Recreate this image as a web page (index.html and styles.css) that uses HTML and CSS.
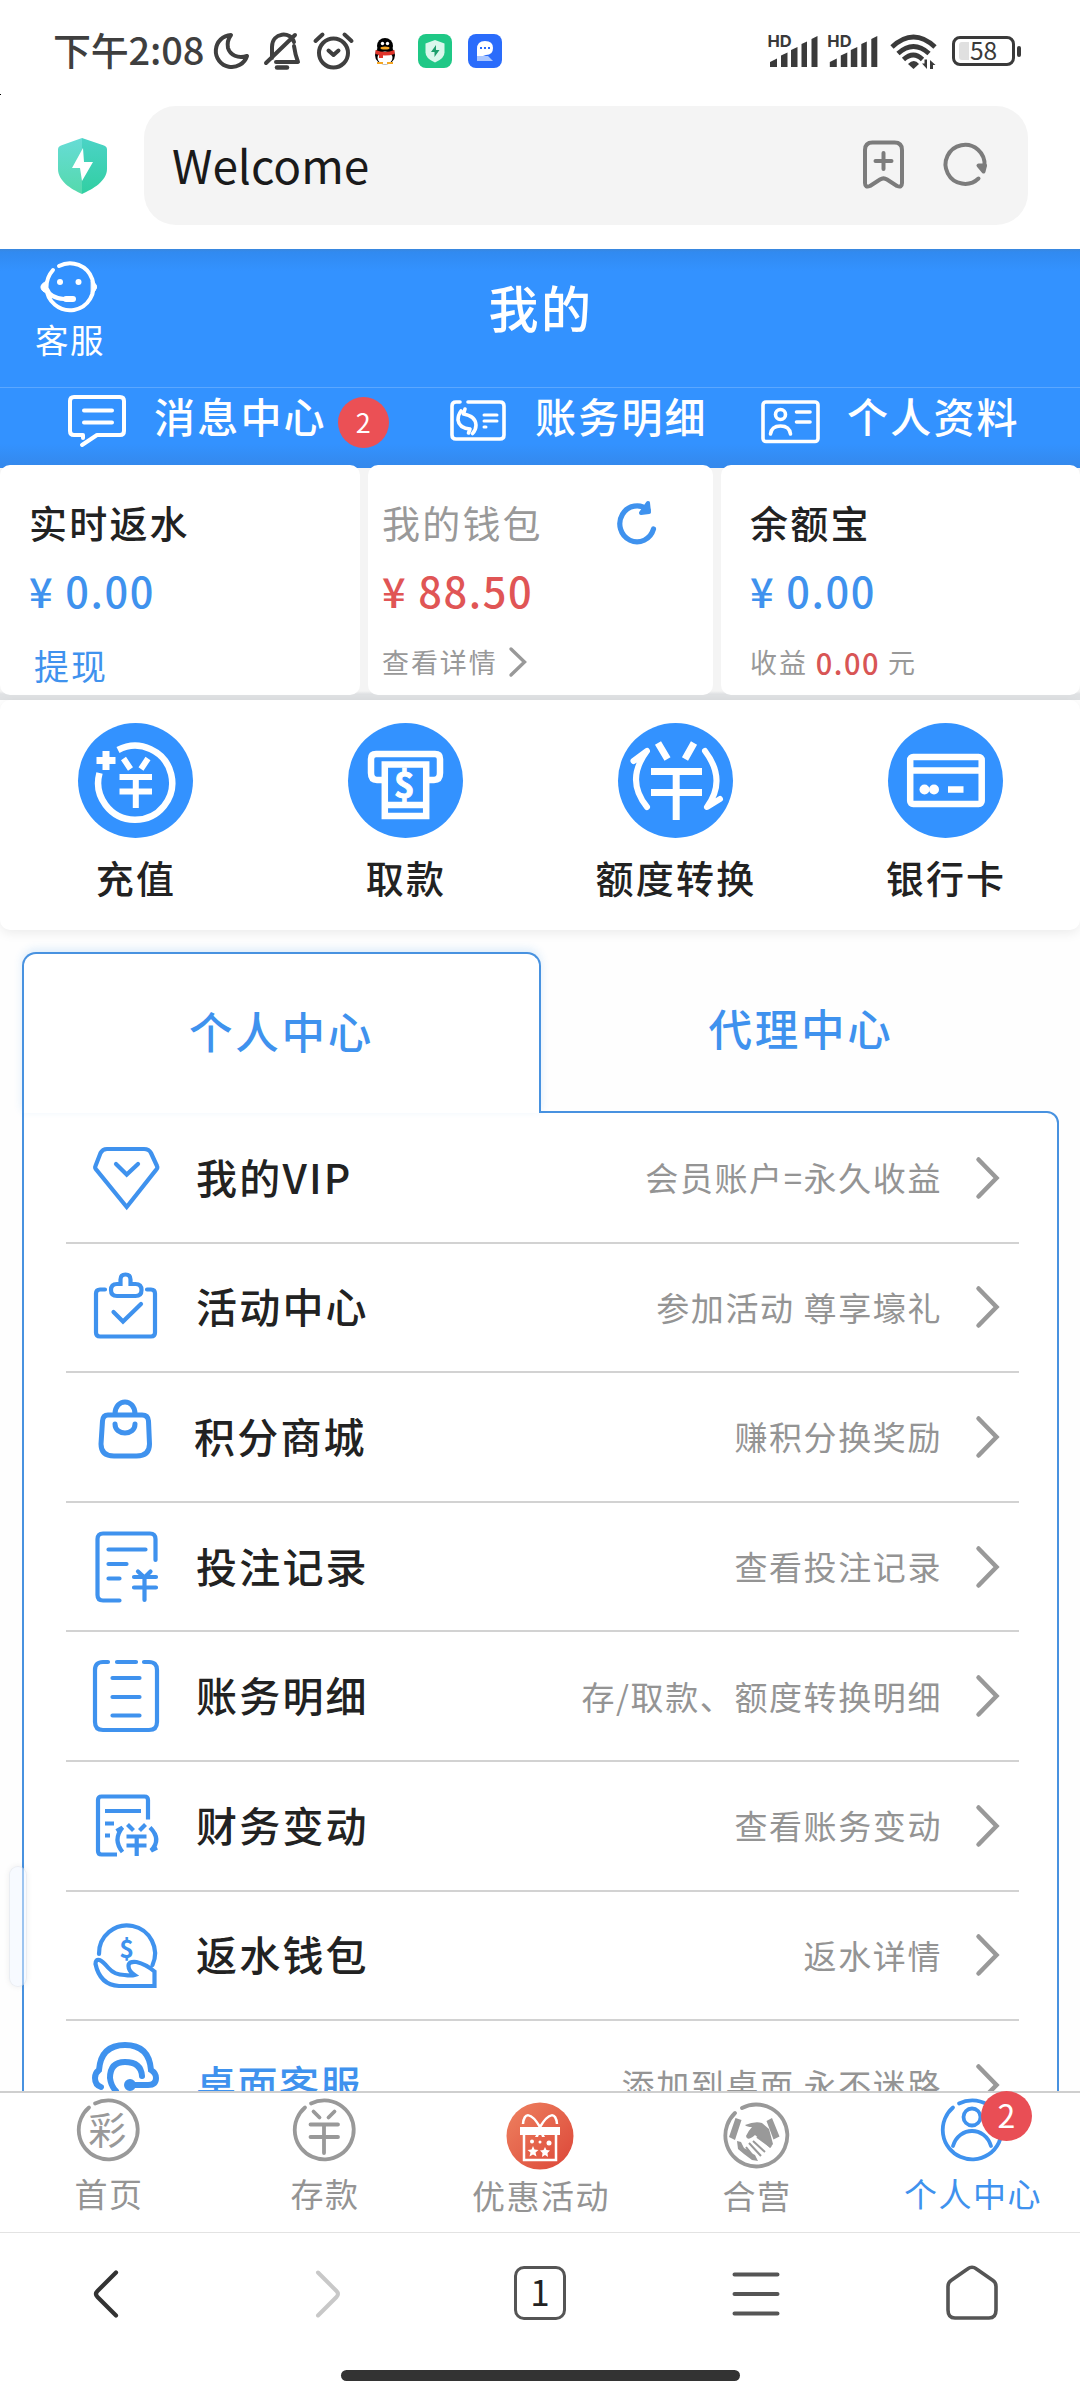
FILE: index.html
```html
<!DOCTYPE html>
<html lang="zh-CN">
<head>
<meta charset="utf-8">
<title>我的</title>
<link rel="stylesheet" href="styles.css">
</head>
<body>
<div class="screen">
  <div class="status">
    <span class="clock">下午2:08</span>
    <svg class="status-icons" width="298" height="44" viewBox="212 30 298 44">
      <g fill="none" stroke="#3f3f3f" stroke-width="4" stroke-linecap="round" stroke-linejoin="round">
        <path d="M231 35a16 16 0 1 0 16 21c-9 3-17-1-19-8-1-5 0-9 3-13z"/>
        <path d="M272 58V47c0-15 19-16 22-5M294 46c1 7 2 11 4 16h-22M266 63l29-28"/>
        <path d="M277 67.500h10" stroke-width="4.500"/>
        <circle cx="333.500" cy="53" r="14.500"/><path d="M328.500 50.500l5 4.500 5-4.500M315.500 41l7-6.500M351.500 41l-7-6.500"/>
      </g>
      <g>
        <ellipse cx="385" cy="55" rx="10" ry="9.500" fill="#000"/><circle cx="385" cy="46" r="8" fill="#000"/>
        <ellipse cx="385" cy="58" rx="7.500" ry="6.500" fill="#fff"/>
        <path d="M375.500 50q9.500 4 19 0v4q-9.500 3-19 0z" fill="#e0352b"/><path d="M379 54h4v4h-4z" fill="#e0352b"/>
        <circle cx="382.500" cy="43.500" r="1.700" fill="#fff"/><circle cx="387.500" cy="43.500" r="1.700" fill="#fff"/>
        <ellipse cx="385" cy="48" rx="4.500" ry="1.500" fill="#f5a623"/>
        <path d="M377 63h6M387 63h6" stroke="#f5a623" stroke-width="2"/>
      </g>
      <rect x="418" y="34" width="34" height="34" rx="8" fill="#1fc886"/>
      <path d="M435 40l9.500 3.500v9q0 6-9.500 10-9.500-4-9.500-10v-9z" fill="#d9f7ec"/>
      <path d="M436 45l-5 7h3.500v5l5-7H436z" fill="#1b9e6b"/>
      <rect x="468" y="34" width="34" height="34" rx="8" fill="#2a6cfb"/>
      <path d="M477 56v-7q0-8 8-8t8 7-7 7l-3 1z" fill="#fff"/><path d="M477 61v-5h11l5 5z" fill="#a9c6ff"/>
      <path d="M480 48h2M484 48h2M488 48h2" stroke="#2a6cfb" stroke-width="2"/>
    </svg>
    <svg class="status-right" width="260" height="44" viewBox="764 30 260 44">
      <g fill="#3a3a3a">
        <g id="sig">
          <text x="767.500" y="47" font-size="16.500" font-weight="700" class="hd">HD</text>
          <path d="M770 67v-5l7-3.500V67zM781 67V55.500l6.500-3V67zM791 67V50l6.500-3V67zM801.500 67V44l5.500-2.500V67zM811.500 67V39l6-3V67z"/>
        </g>
        <use href="#sig" x="59.800"/>
        <path d="M908 64q6-6 11 0l-5.500 5z"/>
        <path d="M927 69l-5-5.500h2.500v-4h2.500zM930 60l5.500 5H933v4h-3z"/>
      </g>
      <g fill="none" stroke="#3a3a3a" stroke-width="4.800">
        <path d="M892 47q21.500-20 43 0M898 53.500q15.500-14 31 0M903.500 59.500q10-9 19 0"/>
        <rect x="953.500" y="37.500" width="60" height="27" rx="6.500" stroke-width="3"/>
        <path d="M1019 48v7" stroke-width="4" stroke-linecap="round"/>
      </g>
      <path d="M969 42v18h-7q-3 0-3-3V45q0-3 3-3z" fill="#e0e0e0"/>
      <text x="983.500" y="60" font-size="24.500" text-anchor="middle" fill="#3a3a3a" class="cjk">58</text>
    </svg>
    <i class="speck"></i>
  </div>

  <div class="address">
    <svg width="50" height="58" viewBox="57 137 50 58">
      <defs><linearGradient id="sh" x1="0" y1="0" x2="0" y2="1"><stop offset="0" stop-color="#66dcd6"/><stop offset="1" stop-color="#55d9ac"/></linearGradient>
      <linearGradient id="sh2" x1="0" y1="0" x2="0" y2="1"><stop offset="0" stop-color="#4bd3c6"/><stop offset="1" stop-color="#31cfa2"/></linearGradient></defs>
      <path d="M82 138l-21 7.500q-3 1-3 4V169c0 12 13 20 24 25z" fill="url(#sh)"/>
      <path d="M82 138l22 7.500q3 1 3 4V169c0 12-14 20-25 25z" fill="url(#sh2)"/>
      <path d="M83 148l-11 20h8l2 13 11-19h-9z" fill="#fff"/>
    </svg>
    <div class="urlbar">
      <span>Welcome</span>
      <svg width="126" height="50" viewBox="862 139 126 50" fill="none" stroke="#7c7c7c" stroke-width="4" stroke-linecap="round" stroke-linejoin="round">
        <path d="M865 150q0-7.500 7.500-7.500h22q7.500 0 7.500 7.500v33q0 5-5 3l-10-6.500q-3.500-2.300-7 0l-10 6.500q-5 2-5-3zM883.500 153v16M875.500 161h16"/>
        <path d="M978.500 178.500A19.500 19.500 0 1 1 984.500 166"/><path d="M978.500 165.500h6.500l-1.500 6z" fill="#7c7c7c"/>
      </svg>
    </div>
  </div>

  <header class="top">
    <div class="titlebar">
      <div class="service">
        <svg width="60" height="54" viewBox="39 260 60 54" fill="none" stroke="#fff" stroke-width="4" stroke-linecap="round">
          <path d="M59 266a23.500 23.500 0 1 1-12.500 21c0-8 3-13 6.500-17M47 289q3 9 17 10h6"/>
          <path d="M66 299h7" stroke-width="6"/>
          <path d="M47 281q-7 3-6 7 1 4 6 5zM91.500 281q6 3 5 7-1 4-5 5z" fill="#fff" stroke-width="1"/>
          <circle cx="60" cy="282" r="3" fill="#fff" stroke="none"/><circle cx="78.500" cy="282" r="3" fill="#fff" stroke="none"/>
        </svg>
        <span>客服</span>
      </div>
      <h1>我的</h1>
    </div>
    <nav class="quick">
      <a class="q1">
        <svg width="60" height="54" viewBox="67 394 60 54" fill="none" stroke="#fff" stroke-width="4" stroke-linecap="round" stroke-linejoin="round"><path d="M83 438v-3H74q-4 0-4-4v-30q0-4 4-4h46q4 0 4 4v30q0 4-4 4H97L82 445M84 410.500h28M84 422.500h28"/></svg>
        <span>消息中心</span><b>2</b>
      </a>
      <a class="q2">
        <svg width="58" height="54" viewBox="449 394 58 54" fill="none" stroke="#fff" stroke-width="3.600" stroke-linecap="round"><path d="M460 402h-4q-4 0-4 4v29q0 4 4 4h44q4 0 4-4v-29q0-4-4-4h-32"/><path d="M465 409l-1.500 5q12 2 12.500 11 0 5-3.500 8.500M468.500 433l1.500-4q-11-1-12-9 0-5 3-9" stroke-linejoin="round"/><path d="M484 415h13M484 421h13M484 427h2" stroke-width="3"/></svg>
        <span>账务明细</span>
      </a>
      <a class="q3">
        <svg width="60" height="54" viewBox="760 394 60 54" fill="none" stroke="#fff" stroke-width="3.600" stroke-linecap="round"><rect x="763" y="402" width="55" height="39.500" rx="3"/><circle cx="780.500" cy="414.500" r="5"/><path d="M770.500 434q1-8 10-8t10 8M796.500 412h13.500M796.500 422h13.500"/></svg>
        <span>个人资料</span>
      </a>
    </nav>
  </header>

  <section class="cards">
    <div class="card c1">
      <h2>实时返水</h2>
      <p class="amount">¥ 0.00</p>
      <p class="withdraw">提现</p>
    </div>
    <div class="card c2">
      <h2 class="muted">我的钱包
        <svg width="42" height="46" viewBox="616 500 42 46" fill="none" stroke="#3f92ee" stroke-width="5.200" stroke-linecap="round" stroke-linejoin="round"><path d="M653.500 529A17.200 18 0 1 1 648 510"/><path d="M648 503l1 9-8 1z" stroke-width="4" fill="#3f92ee"/></svg>
      </h2>
      <p class="amount red">¥ 88.50</p>
      <p class="small">查看详情 <svg width="20" height="32" viewBox="-2 0 20 32" fill="none" stroke="#999" stroke-width="3.400" stroke-linecap="round"><path d="M3 3l13.500 13L3 29"/></svg></p>
    </div>
    <div class="card c3">
      <h2>余额宝</h2>
      <p class="amount">¥ 0.00</p>
      <p class="small">收益 <em>0.00</em> 元</p>
    </div>
  </section>

  <section class="actions">
    <a><svg width="115" height="115" viewBox="0 0 115 115"><circle cx="57.500" cy="57.500" r="57.500" fill="#3392ff"/><g fill="none" stroke="#fff" stroke-width="6.500"><path d="M21.500 50A37 37 0 1 0 40 27"/><path d="M28 28v19M18.500 37.500h19" stroke-width="7"/><path d="M41.500 54h32.500M41.500 68.500h32.500M57.800 54v31" stroke-width="6"/><path d="M45.500 35.500l7 10.500M70 35.500L63 46" stroke-width="6"/></g></svg><span>充值</span></a>
    <a><svg width="115" height="115" viewBox="0 0 115 115"><circle cx="57.500" cy="57.500" r="57.500" fill="#3392ff"/><g fill="none" stroke="#fff" stroke-width="6.500"><path d="M36 57h-7q-6 0-6-7V36q0-5 5-5h59q5 0 5 5v14q0 7-6 7h-7"/><path d="M36.800 41.500h41.400v51.500H36.800zM37 82h41" stroke-width="6.500"/></g><text x="57.500" y="75" text-anchor="middle" font-size="35" font-weight="700" fill="#fff" stroke="#fff" stroke-width="1" class="cjk">$</text></svg><span>取款</span></a>
    <a><svg width="115" height="115" viewBox="0 0 115 115"><circle cx="57.500" cy="57.500" r="57.500" fill="#3392ff"/><g fill="none" stroke="#fff" stroke-width="7"><path d="M33 48.500h51M33 69.500h51M58.200 48v49M40 20l9.500 16M76 20l-9 16"/><path d="M15.500 38L29 28Q7 57 29 84M87 28q22 29 2 56l13-8" stroke-linecap="round" stroke-linejoin="round" stroke-width="6"/></g></svg><span>额度转换</span></a>
    <a><svg width="115" height="115" viewBox="0 0 115 115"><circle cx="57.500" cy="57.500" r="57.500" fill="#3392ff"/><g fill="none" stroke="#fff" stroke-width="6.500"><rect x="22.200" y="34" width="71.500" height="47" rx="3"/><path d="M22 47.500h71"/><path d="M60 66.500h15.500" stroke-width="6.500"/></g><circle cx="36.500" cy="66.500" r="5" fill="#fff"/><circle cx="46" cy="66.500" r="5" fill="#fff"/></svg><span>银行卡</span></a>
  </section>

  <main class="center">
    <div class="tabs"><div class="tab on">个人中心</div><div class="tab">代理中心</div></div>
    <div class="panel">
      <ul>
        <li><svg class="ic" viewBox="0 0 72 80"><path d="M17 11h37q5 0 7 4l6 13q1 2-1 4L36.700 69 6.500 32q-2-2-1-4l5-13q2-4 6.500-4zM26 26l10.700 10.500L48 26"/></svg><span>我的VIP</span><em>会员账户=永久收益</em><svg class="go" viewBox="0 0 26 44"><path d="M3.500 3.500l18 18.500-18 18.500"/></svg></li>
        <li><svg class="ic" viewBox="0 0 72 80"><path d="M15 22.500h-5q-4 0-4 4v39q0 4 4 4h51q4 0 4-4v-39q0-4-4-4h-4M30.500 17v-4.500q0-5 5-5t5 5V17h5q6 0 6 6t-6 6H27q-6 0-6-6t6-6zM23.500 45l9.500 9.500L51 37"/></svg><span>活动中心</span><em>参加活动 尊享壕礼</em><svg class="go" viewBox="0 0 26 44"><path d="M3.500 3.500l18 18.500-18 18.500"/></svg></li>
        <li class="mall"><svg class="ic" viewBox="0 0 72 80"><path d="M18 18h34q6 0 6.500 6l1 23q0 12-13 12H24q-13 0-13-12l1.500-23q.5-6 5.500-6zM25 17c0-16 20-16 20 0M25 27c0 12 20 12 20 0"/></svg><span>积分商城</span><em>赚积分换奖励</em><svg class="go" viewBox="0 0 26 44"><path d="M3.500 3.500l18 18.500-18 18.500"/></svg></li>
        <li><svg class="ic" viewBox="0 0 72 80"><path d="M65.500 33V12q0-5.500-5.500-5.500H13q-5.500 0-5.500 5.500v56q0 5.500 5.500 5.500h16.500M18.500 22.500h37M18.500 37h18M18.500 51.500h11M44 50h22M44 60.500h22M54.500 50v23M48 44.500l6.500 6 6-6"/></svg><span>投注记录</span><em>查看投注记录</em><svg class="go" viewBox="0 0 26 44"><path d="M3.500 3.500l18 18.500-18 18.500"/></svg></li>
        <li><svg class="ic" viewBox="0 0 72 80"><path d="M18 6h-5q-8 0-8 8v52q0 8 8 8h46q8 0 8-8V14q0-8-8-8h-5M27 6h19M22.500 22h27M22.500 41h27M22.500 59.500h27"/></svg><span>账务明细</span><em>存/取款、额度转换明细</em><svg class="go" viewBox="0 0 26 44"><path d="M3.500 3.500l18 18.500-18 18.500"/></svg></li>
        <li class="change"><svg class="ic" viewBox="0 0 72 80"><path d="M58 33.500V14q0-3.500-3.500-3.500h-43Q8 10.500 8 14v51q0 3.500 3.500 3.500H27M15 25h36M15 37.500h9M15 49.500h5M36.500 50.500h20M36.500 59.500h20M46.700 50v20M37.500 38.500l6 6M55.500 38.500l-6 6M26.500 45l6-3.500q-10 12 0 24.500M60 41.500q12 12 1 23l6-3"/></svg><span>财务变动</span><em>查看账务变动</em><svg class="go" viewBox="0 0 26 44"><path d="M3.500 3.500l18 18.500-18 18.500"/></svg></li>
        <li><svg class="ic" viewBox="0 0 72 80"><path d="M9 39a28 28 0 1 1 53.500 11M5.500 49q0-5 4-4 3 1 9 8t16 7q7 1 10 0-6-4-6-9t8-4q9 2 18 9.500V71H29Q10 70 5.500 49z"/><text x="36.700" y="43" text-anchor="middle" font-size="25" font-weight="700" class="cjk">$</text></svg><span>返水钱包</span><em>返水详情</em><svg class="go" viewBox="0 0 26 44"><path d="M3.500 3.500l18 18.500-18 18.500"/></svg></li>
        <li class="desk"><svg class="ic" viewBox="0 0 72 80"><path d="M11 42q-6-2-6-9 0-5 4-8Q11 0 35 0t26 25q5 3 5 8 0 7-8 7H42M52 31q-1-14-17-14-15 0-15 16 1 8 6 13"/><circle cx="40" cy="40" r="3"/></svg><span>桌面客服</span><em>添加到桌面 永不迷路</em><svg class="go" viewBox="0 0 26 44"><path d="M3.500 3.500l18 18.500-18 18.500"/></svg></li>
      </ul>
    </div>
  </main>

  <nav class="tabbar">
    <a><svg width="66" height="68" viewBox="0 0 66 68"><path class="ring" d="M20 8.500a29.500 29.500 0 1 1-6 4"/><text x="33" y="48.500" text-anchor="middle" font-size="38" fill="#999" class="cjk">彩</text></svg><span>首页</span></a>
    <a><svg width="66" height="68" viewBox="0 0 66 68"><path class="ring" d="M20 8.500a29.500 29.500 0 1 1-6 4M22.500 16.500l6 6M43.500 16.500l-6 6M19.500 29.500h27.500M19.500 42h27.500M33 30v28"/></svg><span>存款</span></a>
    <a class="low"><svg width="68" height="68" viewBox="0 0 68 68"><defs><linearGradient id="gift" x1="0" y1="0" x2="1" y2="1"><stop offset="0" stop-color="#ee8260"/><stop offset="1" stop-color="#dc4638"/></linearGradient></defs><circle cx="34" cy="34" r="33.500" fill="url(#gift)"/><path d="M14 25h40v8H14z" fill="#fff"/><path d="M18 33v25h32V33M34 25C25 10 18 10 17 22M34 25c9-15 16-15 17-3" fill="none" stroke="#fff" stroke-width="2.500"/><path d="M34 25l-5 10h3l2-5 2 5h3z" fill="#fff"/><path d="M27 44l1.500 3.500 4 .5-3 2.500 1 4-3.500-2-3.500 2 1-4-3-2.500 4-.5zM39 45l1.500 3 3.500.5-2.500 2.500.5 4-3-2-3 2 .5-4-2.500-2.500 3.500-.5z" fill="#fff"/><circle cx="26" cy="39.500" r="2" fill="#fff"/><circle cx="43" cy="41" r="2.500" fill="#fff"/><circle cx="34" cy="40" r="1.500" fill="#fff"/></svg><span>优惠活动</span></a>
    <a class="low"><svg width="68" height="68" viewBox="0 0 68 68"><path class="ring" d="M20 6a31 31 0 1 1-7 5"/><g fill="#999"><path d="M13.500 16l6 2-6.500 20-6-3zM50 16l-5.500 3 7 18.500 6-3z"/><path d="M23 23q10-4 17-2l7 6 4 15-3 4-15-13q-8 7-9 1 3-6 6-9-5 0-7-2z"/><path d="M15 39l4 1 3 6 4 2 3 3 4 2 3 6-6-1-8-6-6-5z"/></g><path d="M35 35l14 10M31 39l12 11M27 41l12 13M24 45l8 10" stroke="#999" stroke-width="2" fill="none"/></svg><span>合营</span></a>
    <a class="on"><svg width="66" height="68" viewBox="0 0 66 68"><path class="ring" d="M20 8.500a29.500 29.500 0 1 1-6 4"/><circle class="ring" cx="33" cy="22" r="8.500"/><path class="ring" d="M14 51c6-20 32-20 38 0"/></svg><b>2</b><span>个人中心</span></a>
  </nav>

  <footer class="browser">
    <div class="keys">
      <svg viewBox="0 0 216 60" fill="none" stroke="#333" stroke-width="4.200" stroke-linecap="round" stroke-linejoin="round"><path d="M116 8.500L97.500 27q-3 3 0 6L116 51.500"/></svg>
      <svg viewBox="216 0 216 60" fill="none" stroke="#c8c8c8" stroke-width="4" stroke-linecap="round" stroke-linejoin="round"><path d="M318 8.500L336.500 27q3 3 0 6L318 51.500"/></svg>
      <div class="count"><span>1</span></div>
      <svg viewBox="648 0 216 60" fill="none" stroke="#555" stroke-width="4" stroke-linecap="round"><path d="M734.500 10.500h43M734.500 30h43M734.500 49.500h43"/></svg>
      <svg viewBox="864 0 216 60" fill="none" stroke="#555" stroke-width="3.600" stroke-linejoin="round"><path d="M948 22.500q0-4 3-6l16.500-11.500q4.500-3.500 9 0L993 16.500q3 2 3 6V46q0 8-7 8h-34q-7 0-7-8z"/></svg>
    </div>
    <div class="homebar"></div>
  </footer>
  <i class="edge"></i>
</div>
</body>
</html>
```
FILE: styles.css
```css
* { box-sizing: border-box; margin: 0; padding: 0; }
body { font-family: "Noto Sans CJK SC", "Noto Sans", sans-serif; color: #222; background: #fff; }
h1, h2 { font-weight: 500; }
em, i { font-style: normal; }
svg { display: block; flex: none; overflow: visible; }
.cjk { font-family: "Noto Sans CJK SC", sans-serif; }
.hd { font-family: Inter, sans-serif; }
.screen { position: relative; width: 1080px; height: 2400px; overflow: hidden; display: flex; flex-direction: column; background: #fff; }

.status { height: 106px; padding: 30px 0 0 53px; display: flex; align-items: flex-start; }
.clock { width: 159px; font-size: 38px; font-weight: 500; letter-spacing: -.2px; line-height: 38px; color: #3f3f3f; white-space: nowrap; }
.status-right { margin-left: 254px; }
.speck { position: absolute; left: 0; top: 94px; width: 1px; height: 1px; background: #000; }

.address { height: 143px; padding-left: 57px; display: flex; align-items: flex-start; gap: 37px; }
.address > svg { margin-top: 31px; }
.urlbar { width: 884px; height: 119px; border-radius: 32px; background: #f4f4f4; display: flex; align-items: center; justify-content: space-between; padding: 0 40px 4px 28px; font-size: 46px; color: #1a1a1a; }

.top { height: 216px; color: #fff; background: linear-gradient(#3a87dd 0, #318af0 3px, #3392ff 22px, #3392ff 195px, #3489ed 216px); flex: none; }
.titlebar { height: 139px; border-bottom: 1px solid #5ba7ff; display: grid; grid-template-columns: 140px 1fr 140px; }
.service { padding: 11px 0 0 35px; font-size: 33.500px; letter-spacing: 1.500px; line-height: 36px; }
.service svg { margin-left: 4px; margin-bottom: 7px; }
h1 { text-align: center; font-size: 50px; letter-spacing: 2.500px; line-height: 70px; padding: 22px 0 0 2px; }
.quick { display: flex; height: 77px; padding-left: 67px; font-size: 41px; letter-spacing: 2.200px; line-height: 54px; }
.quick a { display: flex; align-items: flex-start; padding-top: 6px; white-space: nowrap; }
.quick span { margin-top: -6px; font-weight: 500; }
.q1 { width: 382px; } .q1 span { margin-left: 27px; }
.q2 { width: 311px; } .q2 span { margin-left: 28px; }
.q3 span { margin-left: 27px; }
.quick b { width: 51px; height: 51px; margin: 3px 0 0 11px; border-radius: 50%; background: #eb5055; font-size: 27px; line-height: 49px; text-align: center; font-weight: 400; letter-spacing: 0; }

.cards { height: 235px; flex: none; padding-bottom: 5px; display: grid; grid-template-columns: 360px 345px 359px; column-gap: 8px; background: linear-gradient(#3489ed 0, #3489ed 3px, #f4f4f4 3px, #f4f4f4 226px, #dfe1e3 229px); }
.card { background: #fff; border-radius: 10px; padding-top: 31px; white-space: nowrap; }
.c1 { padding-left: 29px; } .c2 { padding-left: 14px; } .c3 { padding-left: 29px; }
.card h2 { font-size: 38px; letter-spacing: 2.200px; line-height: 49px; height: 50px; display: flex; align-items: center; }
.card h2 svg { margin: 4px 0 0 73px; }
.card .muted { color: #999; font-weight: 400; }
.amount { font-size: 41.500px; letter-spacing: 1.600px; line-height: 50px; margin-top: 19px; color: #3f92ee; font-weight: 500; }
.amount.red { color: #e05555; }
.withdraw { font-size: 35px; letter-spacing: 2px; line-height: 44px; margin: 28px 0 0 5px; color: #3f92ee; }
.small { display: flex; align-items: center; font-size: 27px; letter-spacing: 1.900px; line-height: 34px; margin-top: 30px; color: #999; white-space: pre; }
.small em { color: #d85555; letter-spacing: 1.500px; font-size: 29px; font-weight: 500; }

.actions { height: 230px; flex: none; display: grid; grid-template-columns: repeat(4, 1fr); background: #fff; border-radius: 10px; box-shadow: 0 3px 12px rgba(0,0,0,.08); padding-top: 23px; z-index: 1; }
.actions a { display: flex; flex-direction: column; align-items: center; font-size: 38px; font-weight: 500; letter-spacing: 2.200px; line-height: 50px; gap: 14px; }
.actions span { margin-right: -2px; }

.center { height: 1161px; flex: none; padding: 22px 21px 0 22px; background: #fefefe; overflow: hidden; }
.tabs { display: flex; height: 159px; font-size: 43.500px; font-weight: 500; letter-spacing: 2.800px; color: #3f92ee; text-align: center; }
.tab { flex: 1; line-height: 152px; padding-left: 2px; }
.tab.on { position: relative; z-index: 1; flex: none; width: 519px; height: 161px; border: 2px solid #4892e0; border-bottom: 0; border-radius: 14px 14px 0 0; background: #fff; box-shadow: 0 -3px 8px rgba(50,140,230,.16); line-height: 154px; padding-left: 0; }
.panel { height: 1030px; border: 2px solid #4892e0; border-radius: 0 12px 0 0; background: #fff; padding: 1px 38px 0 42px; }
ul { list-style: none; }
li { height: 129.600px; border-bottom: 2px solid #d2d2d2; display: flex; align-items: center; padding: 0 18px 0 24px; }
.ic { width: 72px; height: 80px; fill: none; stroke: #3f92ee; stroke-width: 4.200; stroke-linecap: round; }
.ic text { fill: #3f92ee; stroke: none; }
li span { margin: -4px 0 0 34px; font-size: 41px; font-weight: 500; letter-spacing: 2.200px; line-height: 60px; }
.mall span { margin-left: 32px; }
.mall .ic { stroke-width: 5; }
.desk .ic { stroke-width: 6; }
.change .ic { stroke-linecap: butt; }
.desk span { color: #3f92ee; font-size: 40px; letter-spacing: 1.500px; }
li em { margin: -1px 0 0 auto; font-size: 33px; letter-spacing: 1.600px; color: #949494; white-space: nowrap; }
.go { width: 26px; height: 44px; margin-left: 33px; fill: none; stroke: #999; stroke-width: 4.500; stroke-linecap: round; }

.tabbar { height: 142px; flex: none; border-top: 2px solid #cfcfcf; border-bottom: 1.500px solid #e3e3e3; background: #fff; display: grid; grid-template-columns: repeat(5, 1fr); color: #949494; z-index: 2; }
.tabbar a { position: relative; display: flex; flex-direction: column; align-items: center; padding-top: 2px; font-size: 33px; letter-spacing: 1.500px; line-height: 44px; gap: 8px; }
.tabbar a > span { margin-right: -2px; }
.tabbar .low { padding-top: 9px; gap: 3px; }
.ring { fill: none; stroke: #999; stroke-width: 3.800; stroke-linecap: round; }
.tabbar .on { color: #3f92ee; }
.on .ring { stroke: #3f92ee; }
.tabbar b { position: absolute; left: 117px; top: -2px; width: 51px; height: 50px; border-radius: 50%; background: #e94e55; color: #fff; font-weight: 400; font-size: 32px; line-height: 46px; text-align: center; letter-spacing: 0; }

.browser { flex: 1; background: #fff; }
.keys { display: grid; grid-template-columns: repeat(5, 216px); padding-top: 31px; height: 91px; }
.keys svg { width: 216px; height: 60px; }
.count { display: flex; justify-content: center; padding-top: 2px; }
.count span { width: 52px; height: 54px; border: 3.500px solid #555; border-radius: 10px; font-size: 35px; line-height: 44px; text-align: center; color: #222; }
.homebar { width: 399px; height: 11px; border-radius: 6px; background: #333; margin: 46px auto 0; }
.edge { position: absolute; left: 9px; top: 1866px; width: 18px; height: 121px; border-radius: 9px; background: rgba(240,246,255,.5); border: 1px solid rgba(0,0,0,.05); box-shadow: 0 0 6px rgba(0,0,0,.07); z-index: 2; }
```
